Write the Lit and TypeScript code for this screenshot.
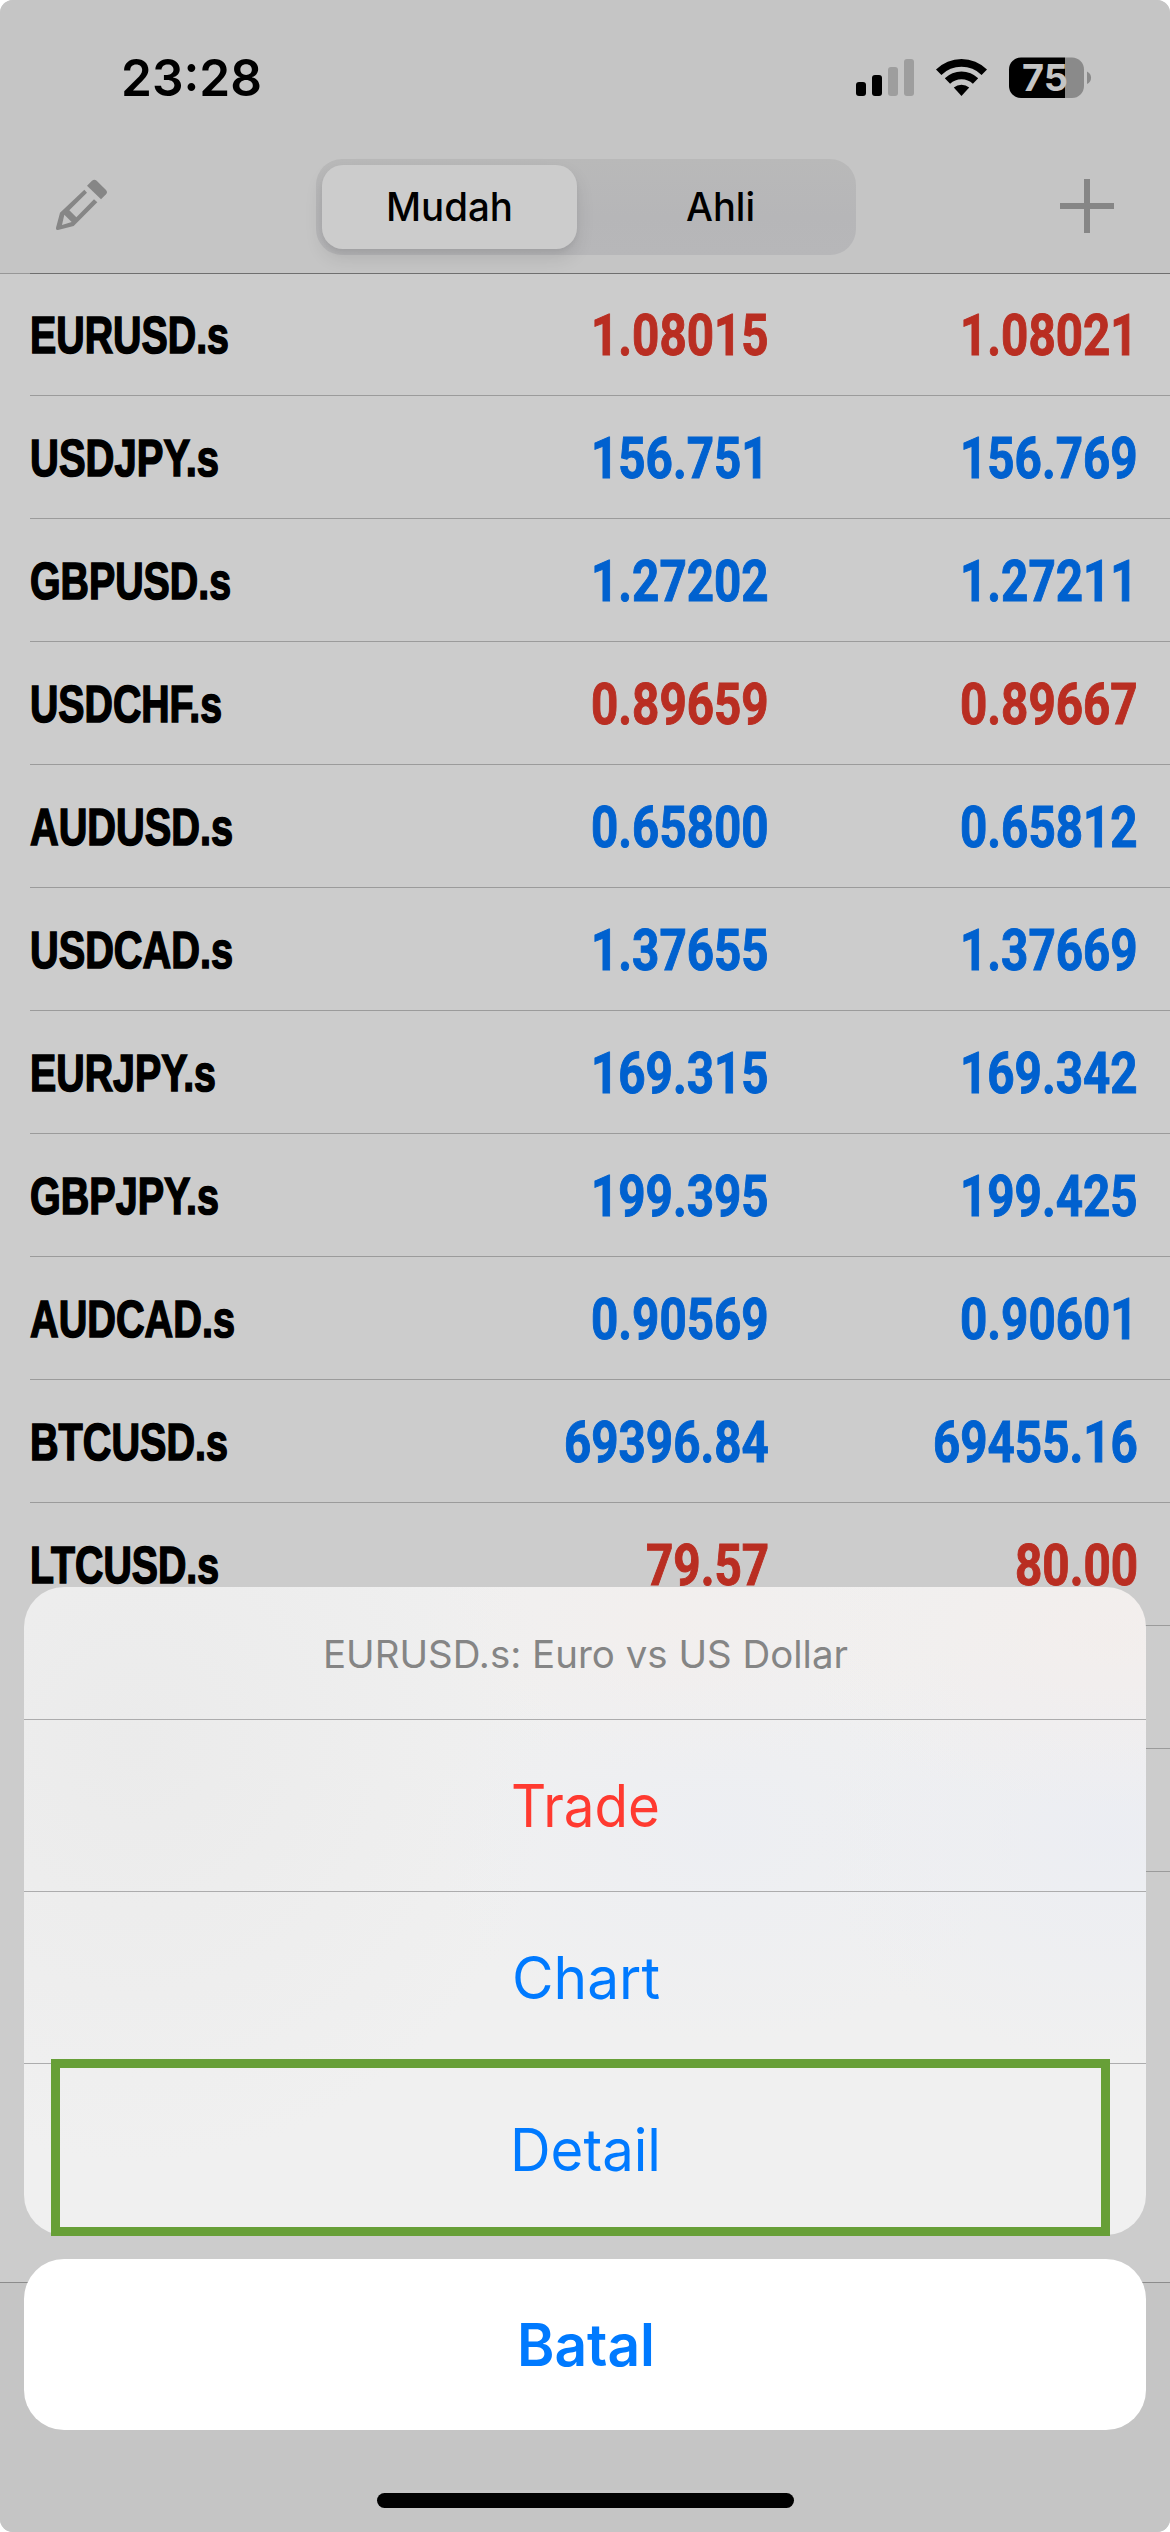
import { LitElement, html, css, svg } from "lit";
import { customElement, property } from "lit/decorators.js";

interface Quote {
  symbol: string;
  width: number;
  bid: string;
  ask: string;
  trend: "up" | "down";
}

const QUOTES: Quote[] = [
  { symbol: "EURUSD.s", width: 199, bid: "1.08015", ask: "1.08021", trend: "down" },
  { symbol: "USDJPY.s", width: 189, bid: "156.751", ask: "156.769", trend: "up" },
  { symbol: "GBPUSD.s", width: 201, bid: "1.27202", ask: "1.27211", trend: "up" },
  { symbol: "USDCHF.s", width: 192, bid: "0.89659", ask: "0.89667", trend: "down" },
  { symbol: "AUDUSD.s", width: 203, bid: "0.65800", ask: "0.65812", trend: "up" },
  { symbol: "USDCAD.s", width: 203, bid: "1.37655", ask: "1.37669", trend: "up" },
  { symbol: "EURJPY.s", width: 186, bid: "169.315", ask: "169.342", trend: "up" },
  { symbol: "GBPJPY.s", width: 189, bid: "199.395", ask: "199.425", trend: "up" },
  { symbol: "AUDCAD.s", width: 205, bid: "0.90569", ask: "0.90601", trend: "up" },
  { symbol: "BTCUSD.s", width: 198, bid: "69396.84", ask: "69455.16", trend: "up" },
  { symbol: "LTCUSD.s", width: 189, bid: "79.57", ask: "80.00", trend: "down" },
];

/** Digits are tabular; the decimal point takes half a digit. */
const priceWidth = (price: string): number => (price.length - 1) * 27.2 + 14.4;

/** A single line of text set to an exact advance width. */
@customElement("fit-text")
class FitText extends LitElement {
  @property() text = "";
  @property({ type: Number }) width = 100;
  @property({ type: Number }) line = 60;
  @property({ type: Number }) baseline = 46;

  static styles = css`
    :host {
      display: block;
      flex: none;
    }
    .line {
      display: block;
      overflow: visible;
    }
    .glyphs {
      fill: currentColor;
      stroke: currentColor;
      stroke-width: var(--embolden, 0);
    }
  `;

  render() {
    return html`<svg class="line" width=${this.width} height=${this.line}>
      <text class="glyphs" x="0" y=${this.baseline} textLength=${this.width} lengthAdjust="spacingAndGlyphs">${this.text}</text>
    </svg>`;
  }
}

@customElement("status-bar")
class StatusBar extends LitElement {
  static styles = css`
    :host {
      display: flex;
      justify-content: space-between;
      height: 147px;
      padding: 48px 78px 0 121px;
      box-sizing: border-box;
      color: #000;
    }
    .time {
      font-size: 51px;
      font-weight: 600;
    }
    .icons {
      display: block;
      width: 236px;
      height: 60px;
    }
    .level {
      font-size: 37.5px;
      font-weight: 700;
      fill: #c5c5c5;
    }
  `;

  render() {
    const bars = [
      [0, 34, 14, "#000"],
      [16, 27, 21, "#000"],
      [32, 19, 29, "#9e9e9e"],
      [48, 11, 37, "#9e9e9e"],
    ];
    return html`
      <fit-text class="time" text="23:28" .width=${141} .line=${60} .baseline=${48.3}></fit-text>
      <svg class="icons" viewBox="0 0 236 60">
        ${bars.map(([x, y, h, c]) => svg`<rect x=${x} y=${y} width="10" height=${h} rx="3" fill=${c}></rect>`)}
        <path d="M80 21.5 A36 36 0 0 1 131 21.5 L125.6 27 A28.5 28.5 0 0 0 85.4 27 Z"></path>
        <path d="M88.8 30.3 A23.8 23.8 0 0 1 122.2 30.3 L116.9 35.8 A16.3 16.3 0 0 0 94.1 35.8 Z"></path>
        <path d="M97.8 39.6 A11.8 11.8 0 0 1 113.2 39.6 L105.5 48 Z"></path>
        <path d="M209 9.5 H216 A12 12 0 0 1 228 21.5 V38 A12 12 0 0 1 216 50 H209 Z" fill="#8a8a8a"></path>
        <path d="M209 9.5 H165 A12 12 0 0 0 153 21.5 V38 A12 12 0 0 0 165 50 H209 Z"></path>
        <path d="M231 23.5 Q235 25.5 235 29.7 Q235 34 231 36 Z" fill="#8a8a8a"></path>
        <text class="level" x="166" y="43.3" textLength="46" lengthAdjust="spacingAndGlyphs">75</text>
      </svg>
    `;
  }
}

@customElement("nav-bar")
class NavBar extends LitElement {
  static styles = css`
    :host {
      display: flex;
      align-items: flex-start;
      justify-content: space-between;
      height: 126px;
      box-sizing: border-box;
      padding: 12px 56px 0 54px;
    }
    .pencil {
      width: 56px;
      height: 54px;
      margin-top: 19px;
      fill: #868686;
    }
    .plus {
      width: 54px;
      height: 54px;
      margin-top: 20px;
      fill: #868686;
    }
    .segments {
      display: grid;
      grid-template-columns: 255px 255px;
      gap: 9px;
      width: 540px;
      height: 96px;
      box-sizing: border-box;
      padding: 6px;
      margin-right: -1px;
      border-radius: 26px;
      background: linear-gradient(#b9b9b9, #b6b6b8 60%, #b7b7b9);
    }
    .segment {
      display: flex;
      justify-content: center;
      align-items: flex-start;
      padding-top: 16px;
      border-radius: 21px;
      font-size: 39px;
      font-weight: 500;
      color: #000;
    }
    .segment.on {
      background: #ccc;
      box-shadow: 0 9px 18px rgba(0, 0, 0, 0.1), 0 3px 4px rgba(0, 0, 0, 0.04);
    }
    .segment.off {
      font-weight: 450;
      padding-left: 14px;
    }
  `;

  render() {
    return html`
      <svg class="pencil" viewBox="72 54 168 162">
        <path fill-rule="evenodd" d="M163 89 L90 158 L78 203 Q77 210 84 210 L131 198 L202 127 L192 118 L139 172 L118 151 L171 98 Z M103 164 L125 186 L96 195 Z"></path>
        <path d="M171 77 L186 62 Q193 56 200 62 L228 90 Q234 97 228 103 L213 118 Z"></path>
      </svg>
      <div class="segments">
        <div class="segment on"><fit-text text="Mudah" .width=${127} .line=${50} .baseline=${40}></fit-text></div>
        <div class="segment off"><fit-text text="Ahli" .width=${69} .line=${50} .baseline=${40}></fit-text></div>
      </div>
      <svg class="plus" viewBox="0 0 54 54">
        <rect x="24" y="0" width="6" height="54"></rect>
        <rect x="0" y="24" width="54" height="6"></rect>
      </svg>
    `;
  }
}

@customElement("quote-row")
class QuoteRow extends LitElement {
  @property({ attribute: false }) quote?: Quote;

  static styles = css`
    :host {
      display: block;
      height: 123px;
      box-sizing: border-box;
      padding-left: 30px;
    }
    .row {
      display: grid;
      grid-template-columns: 1fr 369px 369px;
      height: 123px;
      box-sizing: border-box;
      padding: 33px 32px 0 0;
      border-bottom: 1px solid #9b9b9b;
      font-weight: 700;
    }
    .symbol {
      font-family: "Liberation Sans", Arial, sans-serif;
      font-size: 52.5px;
      color: #000;
      --embolden: 1.6px;
    }
    .price {
      display: flex;
      justify-content: flex-end;
      font-family: Roboto, "Liberation Sans", sans-serif;
      font-size: 57px;
      --embolden: 1px;
    }
    .up {
      color: #0061cf;
    }
    .down {
      color: #b92e22;
    }
  `;

  render() {
    const q = this.quote;
    if (!q) return html`<div class="row"></div>`;
    return html`<div class="row">
      <fit-text class="symbol" text=${q.symbol} .width=${q.width} .line=${60} .baseline=${47}></fit-text>
      ${[q.bid, q.ask].map(
        (p) => html`<div class="price ${q.trend}">
          <fit-text text=${p} .width=${priceWidth(p)} .line=${60} .baseline=${48.7}></fit-text>
        </div>`
      )}
    </div>`;
  }
}

@customElement("action-sheet")
class ActionSheet extends LitElement {
  static styles = css`
    :host {
      display: flex;
      flex-direction: column;
      gap: 24px;
    }
    .group {
      position: relative;
      border-radius: 40px;
      background:
        radial-gradient(ellipse 330px 170px at 97% 8%, rgba(245, 237, 234, 0.6), transparent),
        radial-gradient(ellipse 260px 150px at 58% 6%, rgba(244, 238, 236, 0.6), transparent),
        radial-gradient(ellipse 300px 230px at 97% 38%, rgba(235, 237, 243, 0.85), transparent),
        radial-gradient(ellipse 300px 210px at 62% 38%, rgba(236, 238, 243, 0.8), transparent),
        radial-gradient(ellipse 420px 420px at 10% 24%, #ebebeb, transparent),
        #f0f0f0;
    }
    .title,
    .action,
    .cancel {
      display: flex;
      justify-content: center;
      box-sizing: border-box;
    }
    .title {
      height: 132px;
      padding-top: 40px;
      font-size: 38px;
      color: #858585;
    }
    .action {
      height: 172px;
      padding: 60px 0 0 1px;
      border-top: 1px solid #acacad;
      font-size: 58.5px;
      color: #007aff;
    }
    .action.danger {
      color: #ff3a30;
    }
    .cancel {
      height: 171px;
      padding: 60px 0 0 2px;
      border-radius: 40px;
      background: #fff;
      font-size: 58.5px;
      font-weight: 600;
      color: #007aff;
    }
    .marker {
      position: absolute;
      left: 26.5px;
      right: 36px;
      bottom: -1px;
      height: 177px;
      box-sizing: border-box;
      border: 9px solid #679f37;
    }
  `;

  render() {
    return html`
      <div class="group">
        <div class="title">
          <fit-text text="EURUSD.s: Euro vs US Dollar" .width=${525} .line=${50} .baseline=${41}></fit-text>
        </div>
        <div class="action danger"><fit-text text="Trade" .width=${149} .line=${60} .baseline=${47}></fit-text></div>
        <div class="action"><fit-text text="Chart" .width=${148} .line=${60} .baseline=${47}></fit-text></div>
        <div class="action"><fit-text text="Detail" .width=${151} .line=${60} .baseline=${47}></fit-text></div>
        <div class="marker"></div>
      </div>
      <div class="cancel"><fit-text text="Batal" .width=${138} .line=${60} .baseline=${47}></fit-text></div>
    `;
  }
}

@customElement("app-root")
class AppRoot extends LitElement {
  static styles = css`
    :host {
      display: block;
      background: #fff;
      font-family: Inter, "Liberation Sans", sans-serif;
    }
    .screen {
      position: relative;
      display: flex;
      flex-direction: column;
      width: 1170px;
      height: 2532px;
      overflow: hidden;
      border-radius: 13px;
      background: #ccc;
    }
    .header {
      background: #c5c5c5;
    }
    .edge {
      height: 1px;
      background: linear-gradient(90deg, #979797 30px, #6f6f6f 30px);
    }
    .list {
      flex: 1;
      margin-top: -1px;
    }
    .toolbar {
      height: 250px;
      box-sizing: border-box;
      border-top: 1px solid #8c8c8c;
      background: #c5c5c5;
    }
    .sheet {
      position: absolute;
      left: 24px;
      right: 24px;
      top: 1587px;
    }
    .home {
      position: absolute;
      left: 377px;
      bottom: 24px;
      width: 417px;
      height: 15px;
      border-radius: 8px;
      background: #000;
    }
  `;

  render() {
    return html`
      <div class="screen">
        <div class="header">
          <status-bar></status-bar>
          <nav-bar></nav-bar>
        </div>
        <div class="edge"></div>
        <div class="list">
          ${QUOTES.map((q) => html`<quote-row .quote=${q}></quote-row>`)}
          <quote-row></quote-row>
          <quote-row></quote-row>
        </div>
        <div class="toolbar"></div>
        <action-sheet class="sheet"></action-sheet>
        <div class="home"></div>
      </div>
    `;
  }
}
